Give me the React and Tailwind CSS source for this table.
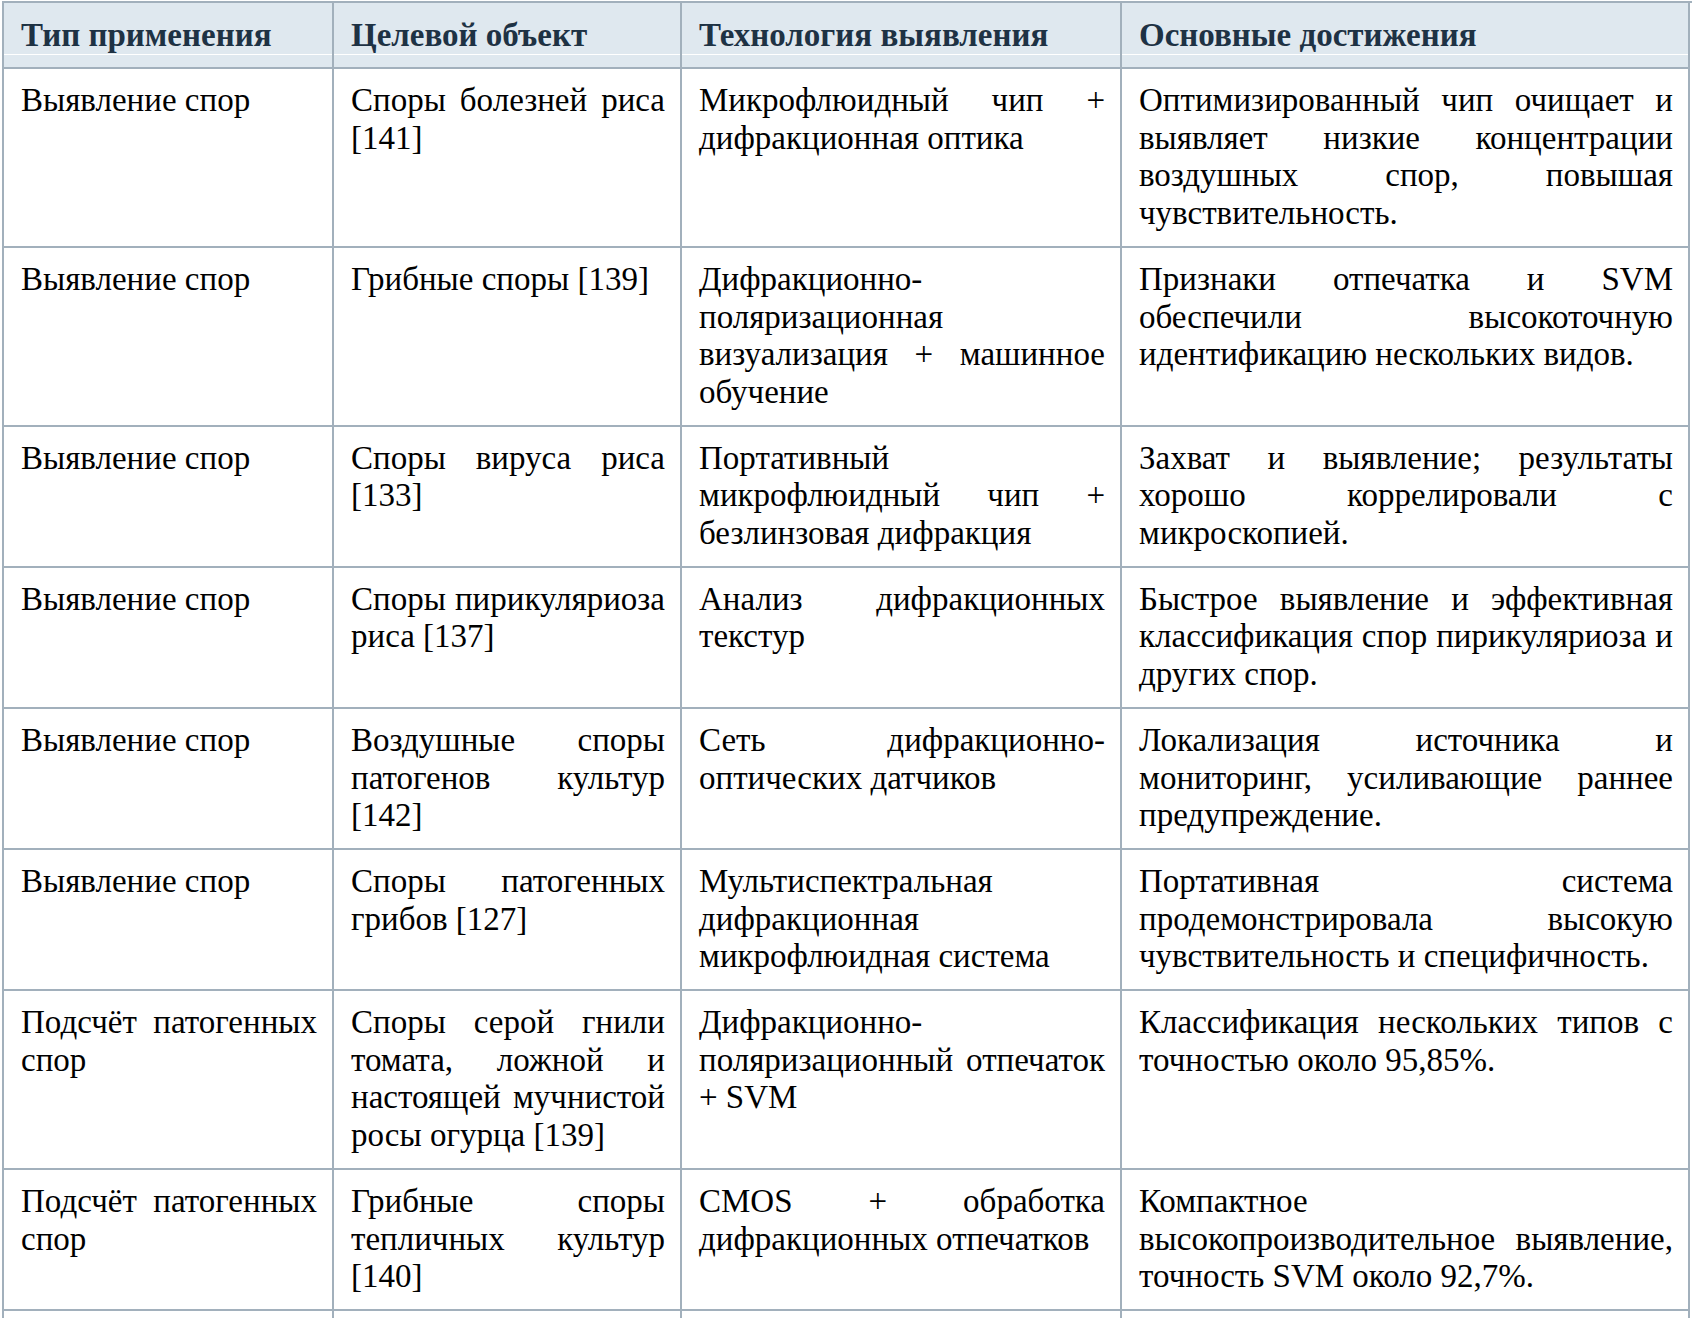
import React from "react";

const rows = [
  ["Выявление спор", "Споры болезней риса [141]", "Микрофлюидный чип + дифракционная оптика", "Оптимизированный чип очищает и выявляет низкие концентрации воздушных спор, повышая чувствительность."],
  ["Выявление спор", "Грибные споры [139]", "Дифракционно-поляризационная визуализация + машинное обучение", "Признаки отпечатка и SVM обеспечили высокоточную идентификацию нескольких видов."],
  ["Выявление спор", "Споры вируса риса [133]", "Портативный микрофлюидный чип + безлинзовая дифракция", "Захват и выявление; результаты хорошо коррелировали с микроскопией."],
  ["Выявление спор", "Споры пирикуляриоза риса [137]", "Анализ дифракционных текстур", "Быстрое выявление и эффективная классификация спор пирикуляриоза и других спор."],
  ["Выявление спор", "Воздушные споры патогенов культур [142]", "Сеть дифракционно-оптических датчиков", "Локализация источника и мониторинг, усиливающие раннее предупреждение."],
  ["Выявление спор", "Споры патогенных грибов [127]", "Мультиспектральная дифракционная микрофлюидная система", "Портативная система продемонстрировала высокую чувствительность и специфичность."],
  ["Подсчёт патогенных спор", "Споры серой гнили томата, ложной и настоящей мучнистой росы огурца [139]", "Дифракционно-поляризационный отпечаток + SVM", "Классификация нескольких типов с точностью около 95,85%."],
  ["Подсчёт патогенных спор", "Грибные споры тепличных культур [140]", "CMOS + обработка дифракционных отпечатков", (
    <>
      Компактное
      <br />
      высокопроизводительное выявление, точность SVM около 92,7%.
    </>
  )],
];

const headers = ["Тип применения", "Целевой объект", "Технология выявления", "Основные достижения"];

export default function App() {
  return (
    <div className="bg-white w-[1692px] h-[1318px] overflow-hidden" style={{ fontFamily: '"Liberation Serif", "Times New Roman", serif' }}>
      <div className="ml-[2px] mt-[1px] grid grid-cols-[330px_348px_440px_568px] border-l-2 border-t-2 border-[#a2b0bc]">
        {headers.map((h) => (
          <div key={h} className="bg-[#dfe8ef] border-r-2 border-b-2 border-[#a2b0bc] flex flex-col">
            <div className="pl-[17px] pr-4 pt-[14px] text-[33px] leading-[36px] font-bold text-[#1e3244]">{h}</div>
            <div className="mt-[1px] h-[1px] bg-white"></div>
            <div className="h-[12px]"></div>
          </div>
        ))}
        {rows.map((r, i) =>
          r.map((c, j) => (
            <div key={i + "-" + j} className="border-r-2 border-b-2 border-[#a2b0bc] pl-[17px] pr-[15px] pt-[13px] pb-[13px] text-[33px] leading-[37.7px] text-black text-justify">
              {c}
            </div>
          ))
        )}
        {[0, 1, 2, 3].map((k) => (
          <div key={"e" + k} className="h-[60px] border-r-2 border-b-2 border-[#a2b0bc]"></div>
        ))}
      </div>
    </div>
  );
}
